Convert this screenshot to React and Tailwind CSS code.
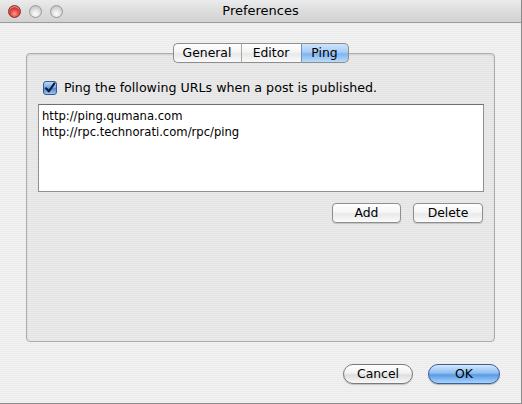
import React from "react";

const font = { fontFamily: '"DejaVu Sans", "Lucida Grande", sans-serif' };

function Light({ red }) {
  return (
    <div
      className={
        red
          ? "w-[13px] h-[13px] rounded-full border border-[#8a2a2a] bg-[radial-gradient(circle_at_50%_70%,#ff9a90_0%,#e0443a_45%,#a81a14_100%)] shadow-[inset_0_1px_1px_rgba(255,255,255,0.6)]"
          : "w-[13px] h-[13px] rounded-full border border-[#9a9a9a] bg-[radial-gradient(circle_at_50%_70%,#ffffff_0%,#dcdcdc_50%,#b4b4b4_100%)]"
      }
    />
  );
}

function Tab({ label, active, first, last }) {
  return (
    <div
      className={
        "h-[20px] flex items-center justify-center text-[12.4px] text-black border-y border-[#8d8d8d] " +
        (first ? "rounded-l-[5px] border-l w-[68px] " : "") +
        (last ? "rounded-r-[5px] border-r w-[48px] " : "") +
        (!first && !last ? "border-l border-l-[#a8a8a8] w-[60px] " : "") +
        (last ? "border-l border-l-[#6f8fc0] " : "") +
        (active
          ? "bg-[linear-gradient(180deg,#cfe3fb_0%,#a6cdf6_45%,#7fb4ee_55%,#b9dcfb_100%)] border-[#5d7fb3]"
          : "bg-[linear-gradient(180deg,#ffffff_0%,#f4f4f4_45%,#e8e8e8_55%,#fafafa_100%)]")
      }
    >
      {label}
    </div>
  );
}

function RectButton({ label, w }) {
  return (
    <div
      className={
        "h-[20px] rounded-[4px] border border-[#8e8e8e] flex items-center justify-center text-[12.4px] text-black bg-[linear-gradient(180deg,#ffffff_0%,#f6f6f6_45%,#e9e9e9_55%,#fbfbfb_100%)] shadow-[0_1px_1px_rgba(0,0,0,0.15)] " +
        w
      }
    >
      {label}
    </div>
  );
}

export default function App() {
  return (
    <div
      className="w-[522px] h-[404px] flex flex-col overflow-hidden border-r border-b border-[#8a8a8a] bg-[repeating-linear-gradient(180deg,#f2f2f2_0px,#f2f2f2_1px,#ebebeb_1px,#ebebeb_2px)]"
      style={font}
    >
      {/* Title bar */}
      <div className="h-[23px] shrink-0 flex items-center relative border-b border-[#9c9c9c] bg-[linear-gradient(180deg,#ebebeb_0%,#dddddd_50%,#d2d2d2_100%)]">
        <div className="flex items-center gap-[8px] pl-[8px]">
          <Light red />
          <Light />
          <Light />
        </div>
        <div className="absolute inset-0 flex items-center justify-center text-[13px] text-black">
          Preferences
        </div>
      </div>

      {/* Body */}
      <div className="flex-1 flex flex-col px-[26px] pt-[20px]">
        <div className="flex justify-center relative z-10">
          <Tab label="General" first />
          <Tab label="Editor" />
          <Tab label="Ping" active last />
        </div>

        <div className="-mt-[10px] h-[289px] rounded-[4px] border border-[#ababab] shadow-[inset_0_1px_2px_rgba(0,0,0,0.1)] bg-[repeating-linear-gradient(180deg,#eaeaea_0px,#eaeaea_1px,#e4e4e4_1px,#e4e4e4_2px)] flex flex-col pt-[27px] pl-[11px] pr-[10px]">
          <div className="flex items-center gap-[7px] ml-[5px] h-[14px]">
            <div className="w-[14px] h-[14px] rounded-[3px] border border-[#3a5a8c] bg-[linear-gradient(180deg,#bcd8f6_0%,#6ea3e2_50%,#4b86d3_55%,#9cc6f3_100%)] flex items-center justify-center">
              <svg width="12" height="12" viewBox="0 0 12 12">
                <path d="M2 6.2 L4.8 9.4 L10.4 1.4" stroke="#0b1a33" strokeWidth="2" fill="none" strokeLinecap="round" strokeLinejoin="round" />
              </svg>
            </div>
            <span className="text-[12.65px] text-black">Ping the following URLs when a post is published.</span>
          </div>

          <div className="mt-[9px] h-[88px] bg-white border border-[#8f8f8f] border-t-[#6f6f6f] pl-[3px] pt-[3px] text-[11.6px] leading-[16px] text-black">
            <div>http://ping.qumana.com</div>
            <div>http://rpc.technorati.com/rpc/ping</div>
          </div>

          <div className="flex justify-end gap-[12px] mt-[11px] pr-[1px]">
            <RectButton label="Add" w="w-[69px]" />
            <RectButton label="Delete" w="w-[70px]" />
          </div>
        </div>

        <div className="flex justify-end gap-[15px] mt-[22px] -mr-[5px]">
          <div className="w-[70px] h-[20px] rounded-full border border-[#7a7a7a] flex items-center justify-center text-[12.4px] text-black bg-[linear-gradient(180deg,#ffffff_0%,#f2f2f2_45%,#dedede_55%,#f8f8f8_100%)] shadow-[0_1px_1px_rgba(0,0,0,0.2)]">
            Cancel
          </div>
          <div className="w-[72px] h-[20px] rounded-full border border-[#3a5f9a] flex items-center justify-center text-[12.4px] text-black bg-[linear-gradient(180deg,#d6e8fb_0%,#8cbef1_45%,#5a9ae6_55%,#a9d4fb_100%)] shadow-[0_1px_1px_rgba(0,0,0,0.25)]">
            OK
          </div>
        </div>
      </div>
    </div>
  );
}
